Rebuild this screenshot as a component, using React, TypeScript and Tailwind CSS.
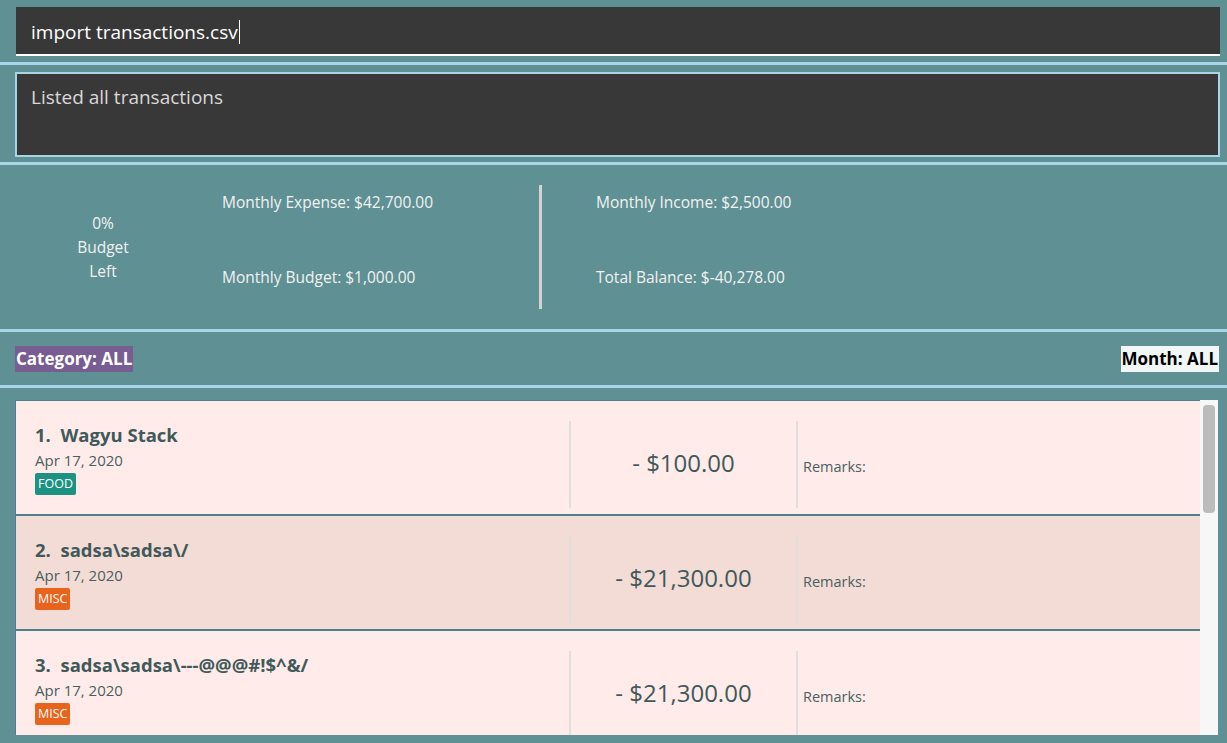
import React from "react";

type Txn = {
  id: number;
  title: string;
  date: string;
  tag: string;
  amount: string;
  shade: string;
};

const transactions: Txn[] = [
  { id: 1, title: "Wagyu Stack", date: "Apr 17, 2020", tag: "FOOD", amount: "- $100.00", shade: "bg-[#ffecea]" },
  { id: 2, title: "sadsa\\sadsa\\/", date: "Apr 17, 2020", tag: "MISC", amount: "- $21,300.00", shade: "bg-[#f3dcd6]" },
  { id: 3, title: "sadsa\\sadsa\\---@@@#!$^&/", date: "Apr 17, 2020", tag: "MISC", amount: "- $21,300.00", shade: "bg-[#ffecea]" },
];

const tagColor: Record<string, string> = {
  FOOD: "bg-[#1b9282]",
  MISC: "bg-[#e8631c]",
};

function Separator() {
  return <div className="h-[3px] w-full shrink-0 bg-[#a9d3e6]" />;
}

function TransactionCard({ txn }: { txn: Txn }) {
  return (
    <div className={`flex h-[115px] shrink-0 border-b-2 border-[#4d7f8c] ${txn.shade}`}>
      <div className="w-[553px] shrink-0 pl-[19px] pt-[22px]">
        <div className="text-[18.5px] font-bold leading-[24px] text-[#41595a]">
          {txn.id}.&nbsp; {txn.title}
        </div>
        <div className="mt-[3px] text-[15px] leading-[20px] text-[#4a5f60]">{txn.date}</div>
        <span
          className={`mt-[1px] inline-block rounded-[2px] px-[3px] text-[12.5px] leading-[22px] text-white ${tagColor[txn.tag]}`}
        >
          {txn.tag}
        </span>
      </div>
      <div className="mb-[6px] mt-[20px] w-[2px] shrink-0 bg-[#e2dede]" />
      <div className="flex w-[225px] shrink-0 items-center justify-center pt-[10px] text-[24px] text-[#41595a]">
        {txn.amount}
      </div>
      <div className="mb-[6px] mt-[20px] w-[2px] shrink-0 bg-[#e2dede]" />
      <div className="flex items-center pl-[5px] pt-[18px] text-[14.5px] text-[#4a5f60]">Remarks:</div>
    </div>
  );
}

export default function App() {
  return (
    <div
      className="flex h-[743px] w-full flex-col overflow-hidden bg-[#5f9094]"
      style={{ fontFamily: '"Open Sans", "Noto Sans", sans-serif' }}
    >
      {/* command box */}
      <div className="shrink-0 pb-[6px] pl-[16px] pr-[7px] pt-[7px]">
        <div className="flex h-[49px] items-center border-b-2 border-white bg-[#383838] pl-[15px] pt-[3px] text-[19px] text-white">
          import transactions.csv
          <span className="ml-[1px] inline-block h-[24px] w-[1px] bg-white" />
        </div>
      </div>
      <Separator />

      {/* result display */}
      <div className="shrink-0 pb-[5px] pl-[15px] pr-[7px] pt-[7px]">
        <div className="h-[85px] border-2 border-[#a9d3e6] bg-[#383838] pl-[14px] pt-[9px] text-[19px] text-[#d8d8d8]">
          Listed all transactions
        </div>
      </div>
      <Separator />

      {/* summary */}
      <div className="flex h-[164px] shrink-0 items-center text-[15.5px] text-[#f2f2f2]">
        <div className="flex w-[206px] shrink-0 flex-col items-center leading-[24px]">
          <span>0%</span>
          <span>Budget</span>
          <span>Left</span>
        </div>
        <div className="flex h-[124px] w-[333px] shrink-0 flex-col justify-between pl-[16px] pb-[20px] pt-[6px]">
          <span>Monthly Expense: $42,700.00</span>
          <span>Monthly Budget: $1,000.00</span>
        </div>
        <div className="h-[124px] w-[3px] shrink-0 bg-[#d3d3d3]" />
        <div className="flex h-[124px] flex-col justify-between pl-[54px] pb-[20px] pt-[6px]">
          <span>Monthly Income: $2,500.00</span>
          <span>Total Balance: $-40,278.00</span>
        </div>
      </div>
      <Separator />

      {/* filters */}
      <div className="flex h-[53px] shrink-0 items-center justify-between pl-[15px] pr-[8px]">
        <span className="bg-[#775d92] px-[1px] text-[17px] font-bold leading-[26px] text-white">
          Category: ALL
        </span>
        <span className="bg-[#f1f6f6] px-[1px] text-[17px] font-bold leading-[26px] text-black">
          Month: ALL
        </span>
      </div>
      <Separator />

      {/* transaction list */}
      <div className="flex min-h-0 flex-1 pb-[8px] pl-[15px] pr-[9px] pt-[12px]">
        <div className="flex min-w-0 flex-1 flex-col overflow-hidden border-l border-t border-[#4d7f8c]">
          {transactions.map((t) => (
            <TransactionCard key={t.id} txn={t} />
          ))}
        </div>
        <div className="w-[18px] shrink-0 bg-[#f7f7f7] px-[3px] pt-[5px]">
          <div className="h-[108px] rounded-[4px] bg-[#bcbcbc]" />
        </div>
      </div>
    </div>
  );
}
